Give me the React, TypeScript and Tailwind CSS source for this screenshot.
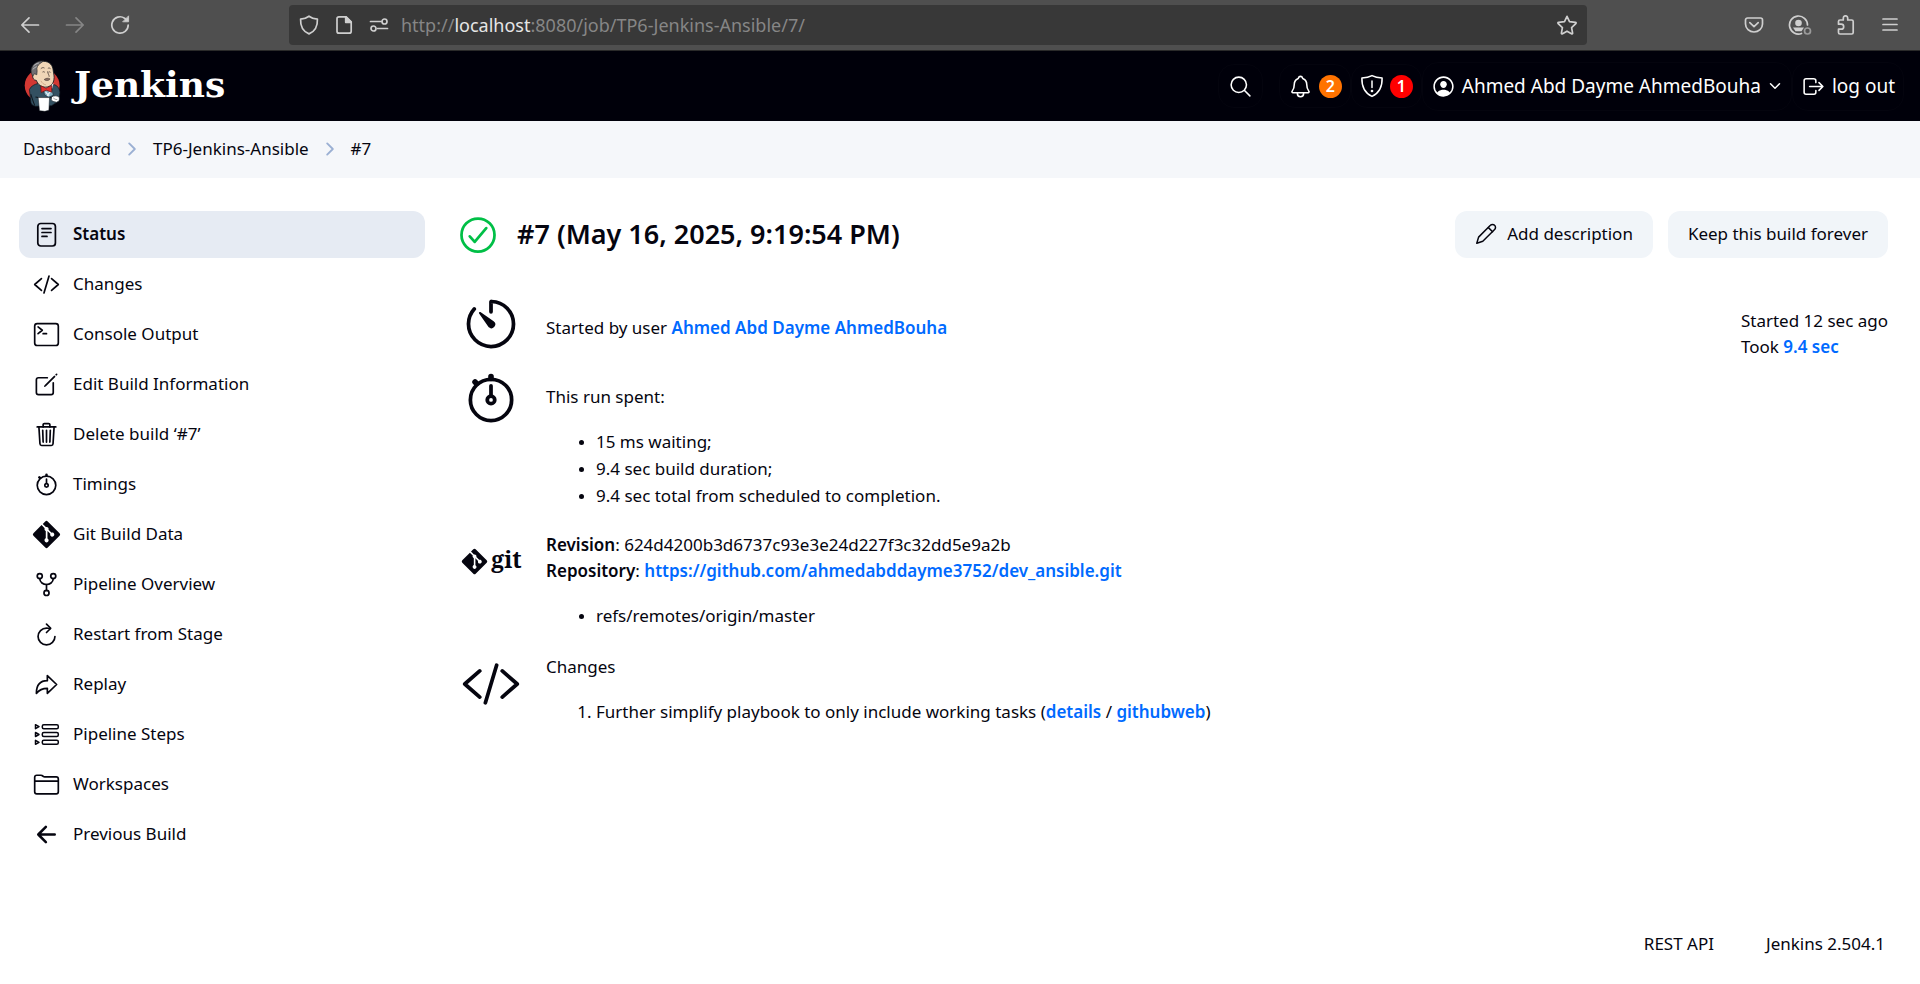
import type { ReactNode } from "react";
import {
  IoTimerOutline,
  IoStopwatchOutline,
  IoCodeSlashOutline,
  IoTerminalOutline,
  IoCreateOutline,
  IoTrashOutline,
  IoGitNetworkOutline,
  IoRefreshOutline,
  IoArrowRedoOutline,
  IoFolderOutline,
  IoArrowBack,
  IoSearchOutline,
  IoNotificationsOutline,
  IoPersonCircleOutline,
  IoChevronForward,
  IoChevronDown,
  IoCheckmarkCircleOutline,
  IoLogOutOutline,
} from "react-icons/io5";
import { FaGitAlt } from "react-icons/fa";

const toolbarStroke = {
  fill: "none",
  stroke: "currentColor",
  strokeWidth: 1.7,
  strokeLinecap: "round",
  strokeLinejoin: "round",
} as const;

function ToolbarIcon({ children }: { children: ReactNode }) {
  return (
    <svg className="size-5 shrink-0" viewBox="0 0 20 20" aria-hidden="true" {...toolbarStroke}>
      {children}
    </svg>
  );
}

function BrowserBar() {
  return (
    <div className="flex h-[51px] items-center border-b border-[#2a2a2a] bg-[#4f4f4f] text-[#cfcfcf]">
      <div className="flex w-[289px] shrink-0 items-center gap-[25px] pl-5">
        <button aria-label="Back">
          <ToolbarIcon>
            <path d="M18.5 10H2M9 2.8 1.8 10 9 17.2" />
          </ToolbarIcon>
        </button>
        <button aria-label="Forward" className="text-[#868686]">
          <ToolbarIcon>
            <path d="M1.5 10H18M11 2.8 18.2 10 11 17.2" />
          </ToolbarIcon>
        </button>
        <button aria-label="Reload">
          <ToolbarIcon>
            <path d="M18.2 10A8.2 8.2 0 1 1 14.6 3.2L17 5" />
            <path d="M18.6 1.2v5.6H13z" fill="currentColor" strokeWidth="0.8" />
          </ToolbarIcon>
        </button>
      </div>
      <div className="flex h-10 flex-1 items-center rounded bg-[#383838] px-2.5">
        <div className="flex items-center gap-[15px]">
          <ToolbarIcon>
            <path d="M10 1.2C7.6 3 4.6 3.9 1.6 4.1c-.3 6 1.7 12 8.4 14.8 6.7-2.8 8.7-8.8 8.4-14.8C15.4 3.9 12.4 3 10 1.2z" />
          </ToolbarIcon>
          <ToolbarIcon>
            <path d="M5 1.800h7.200l5 5v9.400a2 2 0 0 1-2 2H5a2 2 0 0 1-2-2V3.800a2 2 0 0 1 2-2z" />
            <path d="M11.700 1.800v5.500h5.500z" fill="currentColor" />
          </ToolbarIcon>
          <ToolbarIcon>
            <path d="M1.500 6.500H12M8.500 13.500h10" />
            <circle cx="15.500" cy="6.500" r="2.500" />
            <circle cx="4.500" cy="13.500" r="2.500" />
          </ToolbarIcon>
        </div>
        <div className="ml-3 flex-1 text-[18px] text-[#868686]">
          http://<span className="text-[#e6e6e6]">localhost</span>:8080/job/TP6-Jenkins-Ansible/7/
        </div>
        <button aria-label="Bookmark this page">
          <ToolbarIcon>
            <path d="m10 1.300 2.500 5.300 5.900.8c.8.100.900.700.400 1.200L14.600 12.600l1 5.500c.100.700-.500 1-1.100.700L10 16.200l-4.500 2.600c-.600.300-1.200 0-1.100-.700l1-5.500L1.200 8.600c-.500-.500-.400-1.100.400-1.200l5.900-.800z" />
          </ToolbarIcon>
        </button>
      </div>
      <div className="flex w-[333px] shrink-0 items-center justify-end gap-6 pr-5">
        <button aria-label="Save to Pocket">
          <ToolbarIcon>
            <path d="M3.500 3h13a2 2 0 0 1 2 2v4a8.500 8 0 0 1-17 0V5a2 2 0 0 1 2-2zM5.800 7.600 10 11.700l4.200-4.100" />
          </ToolbarIcon>
        </button>
        <button aria-label="Account">
          <svg className="h-5 w-6 shrink-0" viewBox="0 0 24 20" aria-hidden="true" {...toolbarStroke}>
            <path d="M13.500 18.500A9 9 0 1 1 19.500 10" />
            <circle cx="10.500" cy="8" r="3.300" fill="currentColor" stroke="none" />
            <path d="M5 12.600h11L13.500 16.300H7.500z" fill="currentColor" stroke="none" />
            <circle cx="19.500" cy="16" r="3" stroke="#9a9a9a" />
          </svg>
        </button>
        <button aria-label="Extensions">
          <ToolbarIcon>
            <path d="M2.500 9.200V6.500a1.500 1.500 0 0 1 1.500-1.500h3.300V3a2.200 2.200 0 0 1 4.400 0v2h4a1.500 1.500 0 0 1 1.500 1.500v11a1.500 1.500 0 0 1-1.500 1.500H4a1.500 1.500 0 0 1-1.500-1.500v-3.300h2.700a2.500 2.500 0 0 0 0-5z" />
          </ToolbarIcon>
        </button>
        <button aria-label="Application menu">
          <ToolbarIcon>
            <path d="M3 4h14M3 9.500h14M3 15h14" />
          </ToolbarIcon>
        </button>
      </div>
    </div>
  );
}

function JenkinsMascot() {
  return (
    <svg className="h-[52px] w-[37px]" viewBox="42 30 110 155" aria-hidden="true">
      <ellipse cx="96" cy="106" rx="52" ry="50" fill="#d33833" />
      <path d="M58 118c4-10 16-16 26-18l50 4c8 3 14 12 15 22l-3 26-22 14-48 2c-10-2-14-8-14-16z" fill="#335061" stroke="#101820" strokeWidth="2" />
      <path d="M62 132c4 12 8 24 12 34M76 140c14 4 30 4 48 2" fill="none" stroke="#101820" strokeWidth="3" />
      <path d="M88 98c2 8 8 14 16 18l22-2 4-14z" fill="#e9eef2" />
      <path d="M70 60c-2-16 12-26 30-26 18 0 28 12 29 28 1 8 4 18 2 26-1 12-10 22-24 23-14 0-24-8-28-20-8 0-13-8-11-16 0-5 1-9 2-15z" fill="#f0d6b7" stroke="#101820" strokeWidth="2.500" />
      <path d="M100 33c-18-2-36 10-37 28 0 7 2 12 5 17l5-7 7 3 1-12c-3-8 2-17 8-21z" fill="#706f73" stroke="#2a2a2d" strokeWidth="2" />
      <path d="M70 48c4-4 10-8 16-9M68 58c4-4 8-7 12-8" fill="none" stroke="#c9c9cc" strokeWidth="2.500" />
      <path d="M92 56c4-4 8-4 11-2M113 55c3-2 6-1 8 1" fill="none" stroke="#2a2020" strokeWidth="2" />
      <path d="M97 66c3-2 5-1 7 1M115 66c2-1 5-1 6 1M112 64c1 7 5 11 5 16" fill="none" stroke="#2a2020" strokeWidth="2" />
      <path d="M102 88c6-4 11-5 17-2 0 5-12 8-17 2z" fill="#8a6f62" stroke="#2a2020" strokeWidth="1.500" />
      <path d="M92 92c4 7 9 11 15 12" fill="none" stroke="#c99f84" strokeWidth="2.500" />
      <path d="M100 118l13 1 12-2 4 18-14 6-12-8z" fill="#81b0c4" stroke="#101820" strokeWidth="1.500" />
      <path d="M92 107l15 7 18-8-1 20-16-6-15 7z" fill="#e02c2c" stroke="#5a1210" strokeWidth="2" />
      <path d="M106 125l7 8 7-7M110 137l8-3" fill="none" stroke="#f4f7f9" strokeWidth="3" />
      <path d="M84 142h34l-2 38-12 3-16-2z" fill="#fff" stroke="#101820" strokeWidth="1.500" />
      <path d="M124 140c8-5 18-4 23 1 2 8-1 13-8 15-7-2-13-2-16-7z" fill="#fff" stroke="#101820" strokeWidth="2" />
      <path d="M129 143c4 3 6 5 12 5" fill="none" stroke="#777" strokeWidth="2" />
    </svg>
  );
}

function ShieldAlert() {
  return (
    <svg className="size-6" viewBox="0 0 24 24" aria-hidden="true" fill="none" stroke="currentColor" strokeWidth="1.500" strokeLinecap="round" strokeLinejoin="round">
      <path d="M12 1.600C9 3.200 5.500 3.800 1.900 4c-.3 8.500 2 14.500 10.100 18.400C20.100 18.500 22.400 12.500 22.100 4 18.500 3.800 15 3.200 12 1.600z" />
      <path d="M12 7v6.500" />
      <circle cx="12" cy="17" r="0.600" fill="currentColor" />
    </svg>
  );
}

function Badge({ color, children }: { color: string; children: ReactNode }) {
  return (
    <span className={`flex size-[23px] items-center justify-center rounded-full text-base font-semibold ${color}`}>
      {children}
    </span>
  );
}

const headerItem = "flex items-center gap-1.5 rounded-2xl border border-[#04040e]";

function Header() {
  return (
    <header className="flex h-[70px] items-center justify-between bg-[#00000a] pr-4 pl-6 text-white">
      <a href="#home" className="flex items-center gap-[13px]">
        <JenkinsMascot />
        <span className="pb-1 font-['DejaVu_Serif'] text-[36px] leading-[44px] font-bold">Jenkins</span>
      </a>
      <div className="flex items-center">
        <button aria-label="Search" className={`${headerItem} mr-4 h-11 px-[9px]`}>
          <IoSearchOutline className="size-[25px]" />
        </button>
        <button aria-label="Notifications" className={`${headerItem} h-11 px-2`}>
          <IoNotificationsOutline className="size-[25px]" />
          <Badge color="bg-[#ff7300]">2</Badge>
        </button>
        <button aria-label="Security warnings" className={`${headerItem} h-11 px-2`}>
          <ShieldAlert />
          <Badge color="bg-[#ff0000]">1</Badge>
        </button>
        <a href="#user" className={`${headerItem} h-[49px] px-2 text-[19px]`}>
          <IoPersonCircleOutline className="size-[25px]" />
          Ahmed Abd Dayme AhmedBouha
          <IoChevronDown className="size-4" />
        </a>
        <a href="#logout" className={`${headerItem} h-[49px] px-2 text-[19px]`}>
          <IoLogOutOutline className="size-[25px]" />
          log out
        </a>
      </div>
    </header>
  );
}

function Breadcrumbs() {
  return (
    <nav aria-label="Breadcrumbs" className="flex h-[57px] items-center gap-[11px] bg-[#f5f7fa] px-[23px] pb-0.5">
      <a href="#dashboard">Dashboard</a>
      <IoChevronForward className="size-5 text-[#9bb0d3]" />
      <a href="#job">TP6-Jenkins-Ansible</a>
      <IoChevronForward className="size-5 text-[#9bb0d3]" />
      <a href="#build">#7</a>
    </nav>
  );
}

function DocumentIcon() {
  return (
    <svg className="size-[27px]" viewBox="0 0 27 27" aria-hidden="true" fill="none" stroke="currentColor" strokeWidth="1.700" strokeLinecap="round">
      <rect x="4.800" y="2.500" width="17.600" height="22.500" rx="3" />
      <path d="M9 7.600h9M9 11.500h9M9 15.400h5" />
    </svg>
  );
}

function StepsIcon() {
  return (
    <svg className="size-[27px]" viewBox="0 0 27 27" aria-hidden="true" fill="none" stroke="currentColor" strokeWidth="1.500" strokeLinejoin="round">
      <path d="M2.500 3.700v4l3.500-2zM2.500 11.500v4l3.500-2zM2.500 19.300v4l3.500-2z" />
      <rect x="9.300" y="3.700" width="16" height="4" rx="1.500" />
      <rect x="9.300" y="11.500" width="16" height="4" rx="1.500" />
      <rect x="9.300" y="19.300" width="16" height="4" rx="1.500" />
    </svg>
  );
}

function PencilIcon() {
  return (
    <svg className="size-[22px]" viewBox="0 0 22 22" aria-hidden="true" fill="none" stroke="currentColor" strokeWidth="1.500" strokeLinecap="round" strokeLinejoin="round">
      <path d="M1.800 20.200 3.600 14.100 15.400 2.300a2.900 2.900 0 0 1 4.200 0 2.900 2.900 0 0 1 0 4.200L7.800 18.300z" />
      <path d="M13.400 4.600l4.200 4.200" />
    </svg>
  );
}

const io = "size-[27px]";

const tasks: { label: string; icon: ReactNode }[] = [
  { label: "Status", icon: <DocumentIcon /> },
  { label: "Changes", icon: <IoCodeSlashOutline className={io} /> },
  { label: "Console Output", icon: <IoTerminalOutline className={io} /> },
  { label: "Edit Build Information", icon: <IoCreateOutline className={io} /> },
  { label: "Delete build ‘#7’", icon: <IoTrashOutline className={io} /> },
  { label: "Timings", icon: <IoStopwatchOutline className={io} /> },
  { label: "Git Build Data", icon: <FaGitAlt className="size-[27px] scale-115" /> },
  { label: "Pipeline Overview", icon: <IoGitNetworkOutline className={io} /> },
  { label: "Restart from Stage", icon: <IoRefreshOutline className={io} /> },
  { label: "Replay", icon: <IoArrowRedoOutline className={io} /> },
  { label: "Pipeline Steps", icon: <StepsIcon /> },
  { label: "Workspaces", icon: <IoFolderOutline className={io} /> },
  { label: "Previous Build", icon: <IoArrowBack className={io} /> },
];

function Sidebar() {
  return (
    <nav aria-label="Build" className="flex w-[406px] shrink-0 flex-col gap-[3px]">
      {tasks.map(({ label, icon }, i) => (
        <a
          key={label}
          href="#task"
          aria-current={i === 0 ? "page" : undefined}
          className={`flex h-[47px] items-center gap-[13px] rounded-xl px-3.5 ${i === 0 ? "bg-[#e6ebf3] font-semibold" : ""}`}
        >
          {icon}
          <span className="pb-0.5">{label}</span>
        </a>
      ))}
    </nav>
  );
}

function Link({ children }: { children: ReactNode }) {
  return (
    <a href="#link" className="font-semibold text-[#006aff]">
      {children}
    </a>
  );
}

function SummaryRow({ icon, children }: { icon: ReactNode; children: ReactNode }) {
  return (
    <div className="flex gap-[25px]">
      <div className="flex w-[60px] shrink-0 items-start justify-center">{icon}</div>
      <div className="min-w-0 flex-1 leading-[26px]">{children}</div>
    </div>
  );
}

const list = "mt-[18px] pl-[50px] leading-[27px]";

function BuildSummary() {
  return (
    <div className="flex-1 pl-0.5">
      <SummaryRow icon={<IoTimerOutline className="size-[60px]" />}>
        <p className="pt-[21px]">
          Started by user <Link>Ahmed Abd Dayme AhmedBouha</Link>
        </p>
      </SummaryRow>
      <div className="mt-[14px]">
        <SummaryRow icon={<IoStopwatchOutline className="size-[60px]" />}>
          <p className="pt-4">This run spent:</p>
          <ul className={`${list} list-disc marker:text-[14px]`}>
            <li>15 ms waiting;</li>
            <li>9.4 sec build duration;</li>
            <li>9.4 sec total from scheduled to completion.</li>
          </ul>
        </SummaryRow>
      </div>
      <div className="mt-[23px]">
        <SummaryRow
          icon={
            <span className="mt-3 flex h-[34px] items-center gap-0.5">
              <FaGitAlt className="size-[29px]" />
              <span className="pb-1 font-['Noto_Serif','DejaVu_Serif',serif] text-[23px] leading-6 font-bold">git</span>
            </span>
          }
        >
          <p>
            <b className="font-semibold">Revision</b>: 624d4200b3d6737c93e3e24d227f3c32dd5e9a2b
          </p>
          <p>
            <b className="font-semibold">Repository</b>: <Link>https://github.com/ahmedabddayme3752/dev_ansible.git</Link>
          </p>
          <ul className={`${list} list-disc marker:text-[14px]`}>
            <li>refs/remotes/origin/master</li>
          </ul>
        </SummaryRow>
      </div>
      <div className="mt-[25px]">
        <SummaryRow icon={<IoCodeSlashOutline className="size-[60px]" />}>
          <p>Changes</p>
          <ol className={`${list} list-decimal`}>
            <li>
              Further simplify playbook to only include working tasks (<Link>details</Link> / <Link>githubweb</Link>)
            </li>
          </ol>
        </SummaryRow>
      </div>
    </div>
  );
}

const actionButton = "flex h-[47px] items-center gap-2.5 rounded-xl bg-[#f1f5f9] px-5 pb-0.5";

export default function App() {
  return (
    <div className="flex min-h-screen flex-col bg-white font-['Noto_Sans',sans-serif] text-[17px] text-[#05050f]">
      <BrowserBar />
      <Header />
      <Breadcrumbs />
      <div className="flex flex-1 gap-[31px] pt-[33px] pr-8 pl-[19px]">
        <Sidebar />
        <main className="min-w-0 flex-1">
          <div className="flex h-[47px] items-center justify-between">
            <h1 className="flex items-center gap-[17px] text-[27px] leading-[44px] font-semibold">
              <IoCheckmarkCircleOutline className="size-11 text-[#00bf46]" aria-label="Success" />
              <span className="pb-0.5">#7 (May 16, 2025, 9:19:54 PM)</span>
            </h1>
            <div className="flex gap-[15px]">
              <button className={actionButton}>
                <PencilIcon />
                Add description
              </button>
              <button className={actionButton}>Keep this build forever</button>
            </div>
          </div>
          <div className="mt-9 flex pl-[3px]">
            <BuildSummary />
            <div className="mt-3.5 leading-[26px]">
              Started 12 sec ago
              <br />
              Took <Link>9.4 sec</Link>
            </div>
          </div>
        </main>
      </div>
      <footer className="flex justify-end gap-[52px] px-[35px] pb-[27px] leading-[26px]">
        <a href="#api">REST API</a>
        <a href="#version">Jenkins 2.504.1</a>
      </footer>
    </div>
  );
}
